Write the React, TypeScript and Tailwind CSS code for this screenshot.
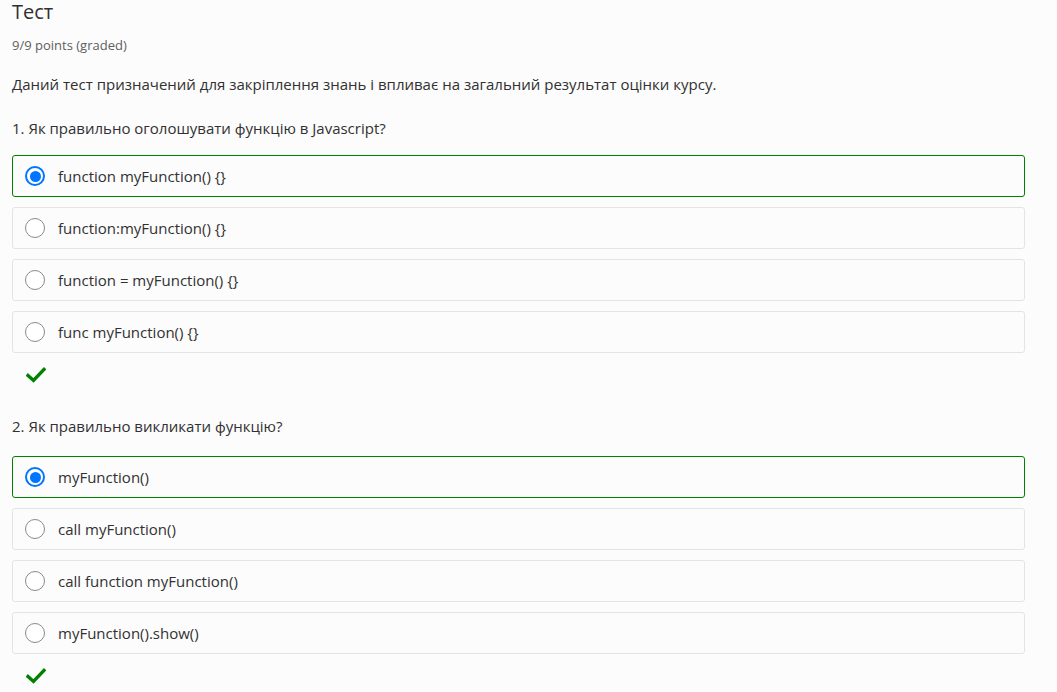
const font = { fontFamily: '"Open Sans", "Noto Sans", sans-serif' };

type Question = {
  title: string;
  options: string[];
  selected: number;
};

const questions: Question[] = [
  {
    title: '1. Як правильно оголошувати функцію в Javascript?',
    options: ['function myFunction() {}', 'function:myFunction() {}', 'function = myFunction() {}', 'func myFunction() {}'],
    selected: 0,
  },
  {
    title: '2. Як правильно викликати функцію?',
    options: ['myFunction()', 'call myFunction()', 'call function myFunction()', 'myFunction().show()'],
    selected: 0,
  },
];

function Radio({ checked }: { checked: boolean }) {
  if (checked) {
    return (
      <span className="flex h-5 w-5 shrink-0 items-center justify-center rounded-full border-2 border-[#0075ff] bg-white">
        <span className="h-[11px] w-[11px] rounded-full bg-[#0075ff]" />
      </span>
    );
  }
  return <span className="h-5 w-5 shrink-0 rounded-full border border-[#8a8a8a] bg-white" />;
}

function CheckMark() {
  return (
    <svg width="20" height="16" viewBox="0 0 20 16" className="ml-[14px]">
      <path d="M2 8.5 L7.5 13.5 L18 2.5" fill="none" stroke="#008100" strokeWidth="3.4" strokeLinecap="square" />
    </svg>
  );
}

function QuestionBlock({ q, first }: { q: Question; first: boolean }) {
  return (
    <div className={first ? 'mt-[22px]' : 'mt-[29px]'}>
      <p className="text-[15px] leading-[22px] text-[#313131]">{q.title}</p>
      <div className={`flex flex-col gap-[10px] ${first ? 'mt-[16px]' : 'mt-[19px]'}`}>
        {q.options.map((opt, i) => (
          <div
            key={opt}
            className={`flex h-[42px] items-center gap-[13px] rounded-[3px] border bg-[#fcfcfc] pl-[12px] ${
              i === q.selected ? 'border-[#008100]' : 'border-[#e4e4e4]'
            }`}
          >
            <Radio checked={i === q.selected} />
            <span className="text-[15px] text-[#313131]">{opt}</span>
          </div>
        ))}
      </div>
      <div className="mt-[11px] flex h-[22px] items-center">
        <CheckMark />
      </div>
    </div>
  );
}

export default function App() {
  return (
    <div className="min-h-[692px] bg-[#fcfcfc]" style={font}>
      <div className="ml-3 w-[1013px]">
        <h1 className="text-[20px] leading-[24px] text-[#313131]">Тест</h1>
        <p className="mt-[12px] text-[13px] leading-[18px] text-[#5e5e5e]">9/9 points (graded)</p>
        <p className="mt-[19px] text-[15px] leading-[22px] text-[#313131]">
          Даний тест призначений для закріплення знань і впливає на загальний результат оцінки курсу.
        </p>
        {questions.map((q, i) => (
          <QuestionBlock key={q.title} q={q} first={i === 0} />
        ))}
      </div>
    </div>
  );
}
